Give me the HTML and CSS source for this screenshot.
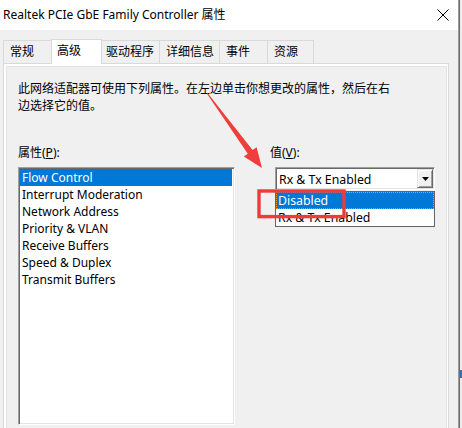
FILE: index.html
```html
<!DOCTYPE html>
<html lang="zh-CN">
<head>
<meta charset="utf-8">
<title>Realtek PCIe GbE Family Controller 属性</title>
<link rel="stylesheet" href="styles.css">
</head>
<body>
<div class="screen">
  <div class="window">
    <div class="titlebar">
      <span class="title">Realtek PCIe GbE Family Controller 属性</span>
      <svg class="close" width="12" height="12" viewBox="0 0 12 12"><path d="M0.5 0.5 L11.5 11.5 M11.5 0.5 L0.5 11.5" stroke="#000" stroke-width="1" fill="none"/></svg>
    </div>
    <div class="tabs">
      <div class="tab t1">常规</div>
      <div class="tab t2 active">高级</div>
      <div class="tab t3">驱动程序</div>
      <div class="tab t4">详细信息</div>
      <div class="tab t5">事件</div>
      <div class="tab t6">资源</div>
    </div>
    <div class="panel">
      <div class="page">
        <p class="desc">此网络适配器可使用下列属性。在左边单击你想更改的属性，然后在右<br>边选择它的值。</p>
        <div class="cols">
          <div class="col-left">
            <div class="label">属性(<u>P</u>):</div>
            <ul class="listbox">
              <li class="item selected">Flow Control</li>
              <li class="item">Interrupt Moderation</li>
              <li class="item">Network Address</li>
              <li class="item">Priority &amp; VLAN</li>
              <li class="item">Receive Buffers</li>
              <li class="item">Speed &amp; Duplex</li>
              <li class="item">Transmit Buffers</li>
            </ul>
          </div>
          <div class="col-right">
            <div class="label">值(<u>V</u>):</div>
            <div class="combo-wrap">
              <div class="combo">
                <span class="combo-text">Rx &amp; Tx Enabled</span>
                <span class="combo-btn"><svg width="7" height="4" viewBox="0 0 7 4"><path d="M0 0 H7 L3.5 4 Z" fill="#000"/></svg></span>
              </div>
              <ul class="dropdown">
                <li class="ditem selected focus">Disabled</li>
                <li class="ditem">Rx &amp; Tx Enabled</li>
              </ul>
            </div>
          </div>
        </div>
      </div>
    </div>
  </div>
  <div class="edge"></div>
  <div class="outside"><span class="bluemark"></span></div>
  <svg class="annot" width="462" height="428" viewBox="0 0 462 428">
    <polygon points="206.6,93.3 207.4,92.7 252.6,150.1 256.6,147.2 262,168 243.8,156.6 247.8,153.7" fill="#ef3e3c"/>
    <rect x="259" y="191" width="85" height="25.6" fill="none" stroke="#ee3a3a" stroke-width="3.4"/>
  </svg>
</div>
</body>
</html>
```

FILE: styles.css
```css
* { box-sizing: border-box; }
html, body { margin: 0; padding: 0; }
body {
  font-family: "Noto Sans", "Noto Sans CJK SC", sans-serif;
  font-size: 12px;
  color: #000;
  background: #e8e8e8;
}
.screen {
  position: relative;
  width: 462px;
  height: 428px;
  overflow: hidden;
  display: flex;
}
.window {
  width: 458px;
  height: 428px;
  background: #f0f0f0;
  display: flex;
  flex-direction: column;
}
.titlebar {
  height: 30px;
  background: #fff;
  display: flex;
  align-items: center;
  justify-content: space-between;
  padding: 0 9px 0 3px;
  flex: none;
}
.title { white-space: nowrap; line-height: 16px; }
.close { display: block; margin-top: 0; }
.tabs {
  height: 33px;
  display: flex;
  align-items: flex-end;
  padding-left: 3px;
  flex: none;
}
.tab {
  height: 23px;
  border: 1px solid #d9d9d9;
  border-bottom: none;
  margin-right: -1px;
  background: #f0f0f0;
  line-height: 21px;
  white-space: nowrap;
  padding-left: 6px;
}
.tab.active {
  height: 25px;
  background: #fff;
  margin-bottom: -1px;
  line-height: 21px;
  position: relative;
  z-index: 1;
}
.t1 { width: 49px; padding-left: 6px; }
.t2 { width: 51px; padding-left: 5px; }
.t3 { width: 59px; padding-left: 4px; }
.t4 { width: 61px; padding-left: 6px; }
.t5 { width: 49px; padding-left: 6px; }
.t6 { width: 47px; padding-left: 6px; }
.panel {
  margin-left: 3px;
  width: 446px;
  flex: 1;
  border: 1px solid #d9d9d9;
  border-bottom: none;
  background: #fff;
  padding: 2px 1px 0 2px;
  display: flex;
}
.page {
  flex: 1;
  background: #f0f0f0;
  border: 1px solid #e3e3e3;
  border-bottom: none;
  padding: 13px 0 0 11px;
}
.desc {
  margin: 0;
  line-height: 17px;
  white-space: nowrap;
}
.cols {
  display: flex;
  gap: 35px;
  margin-top: 30px;
}
.label { line-height: 17px; height: 17px; }
.label u { text-underline-offset: 1px; }
.listbox {
  list-style: none;
  margin: 6px 0 0;
  padding: 0;
  width: 217px;
  height: 258px;
  background: #fff;
  border: 1px solid;
  border-color: #a0a0a0 #fff #fff #a0a0a0;
  box-shadow: inset 1px 1px 0 #696969, inset -1px -1px 0 #e3e3e3;
  padding: 1px 2px 0 1px;
}
.item {
  height: 17px;
  line-height: 17px;
  padding-left: 2px;
  white-space: nowrap;
}
.item.selected { background: #0078d7; color: #fff; }
.col-right { width: 170px; }
.combo-wrap {
  position: relative;
  margin: 6px 0 0 5px;
  width: 160px;
}
.combo {
  height: 23px;
  background: #fff;
  border: 1px solid;
  border-color: #a0a0a0 #fff #fff #a0a0a0;
  box-shadow: inset 1px 1px 0 #696969, inset -1px -1px 0 #e3e3e3;
  padding: 1px 1px 1px 2px;
  display: flex;
  align-items: stretch;
}
.combo-text {
  flex: 1;
  padding: 1px 0 0 1px;
  line-height: 19px;
  font-size: 12.3px;
  white-space: nowrap;
}
.combo-btn {
  width: 16px;
  border: 1px solid;
  border-color: #e3e3e3 #696969 #696969 #e3e3e3;
  box-shadow: inset 1px 1px 0 #fff, inset -1px -1px 0 #a0a0a0;
  background: #f0f0f0;
  display: flex;
  align-items: center;
  justify-content: center;
}
.combo-btn svg { display: block; }
.dropdown {
  position: absolute;
  top: 24px;
  left: 0;
  width: 160px;
  list-style: none;
  margin: 0;
  padding: 0;
  background: #fff;
  border: 1px solid #646464;
}
.ditem {
  height: 17px;
  line-height: 17px;
  padding-left: 2px;
  white-space: nowrap;
  font-size: 12.3px;
}
.ditem.selected { background: #0078d7; color: #fff; }
.ditem.focus { outline: 1px dotted #f7931e; outline-offset: -1px; }
.edge {
  width: 2px;
  height: 428px;
  background: linear-gradient(to right, #9a9a9a 0 1px, #6d6d6d 1px 2px);
  flex: none;
}
.outside {
  width: 2px;
  height: 428px;
  background: #ececec;
  padding-top: 370px;
  flex: none;
}
.bluemark {
  display: block;
  width: 2px;
  height: 8px;
  background: #3b6fb5;
}
.annot {
  position: absolute;
  left: 0;
  top: 0;
  pointer-events: none;
}
```
